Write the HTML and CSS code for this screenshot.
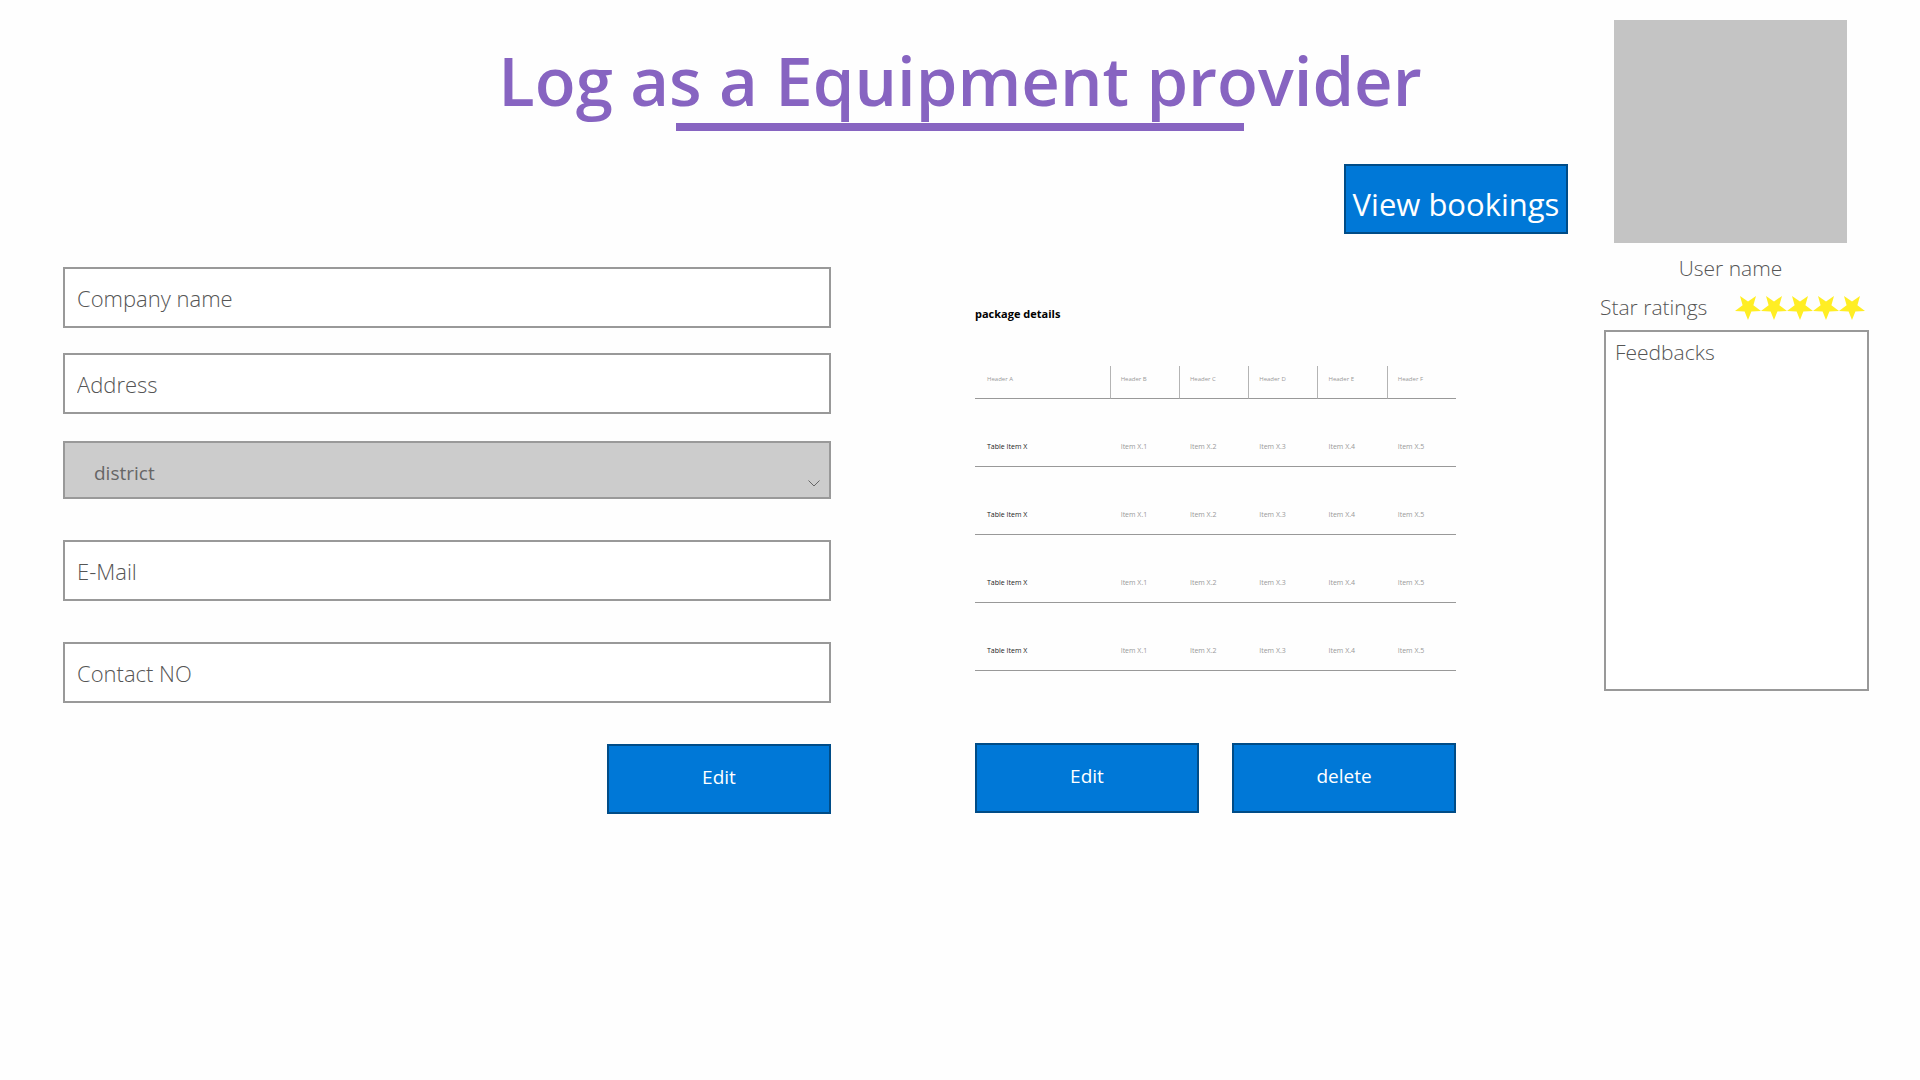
FILE: index.html
```html
<!DOCTYPE html>
<html lang="en">
<head>
<meta charset="utf-8">
<title>Log as a Equipment provider</title>
<link rel="stylesheet" href="styles.css">
</head>
<body>
<svg class="sprite" aria-hidden="true">
  <symbol id="star" viewBox="0 0 26 26">
    <path d="M13 26 L9.6 17.4 L0 17 L7.6 11.3 L5 2 L13 7.4 L21 2 L18.4 11.3 L26 17 L16.4 17.4 Z"/>
  </symbol>
</svg>
<div class="page">
  <header class="page-header">
    <h1>Log as a Equipment provider</h1>
  </header>

  <div class="toolbar">
    <button type="button" class="button button-large">View bookings</button>
  </div>

  <main class="content">
    <form class="company-form">
      <input class="field" type="text" placeholder="Company name" aria-label="Company name">
      <input class="field" type="text" placeholder="Address" aria-label="Address">
      <div class="select-wrap">
        <select class="field select" aria-label="district">
          <option>district</option>
        </select>
        <svg class="chevron" viewBox="0 0 12 7" aria-hidden="true"><path d="M0.5 0.5 L6 6 L11.5 0.5"/></svg>
      </div>
      <input class="field" type="email" placeholder="E-Mail" aria-label="E-Mail">
      <input class="field contact" type="tel" placeholder="Contact NO" aria-label="Contact NO">
      <button type="button" class="button">Edit</button>
    </form>

    <section class="packages">
      <h2>package details</h2>
      <table>
        <thead>
          <tr><th>Header A</th><th>Header B</th><th>Header C</th><th>Header D</th><th>Header E</th><th>Header F</th></tr>
        </thead>
        <tbody>
          <tr><td>Table Item X</td><td>Item X.1</td><td>Item X.2</td><td>Item X.3</td><td>Item X.4</td><td>Item X.5</td></tr>
          <tr><td>Table Item X</td><td>Item X.1</td><td>Item X.2</td><td>Item X.3</td><td>Item X.4</td><td>Item X.5</td></tr>
          <tr><td>Table Item X</td><td>Item X.1</td><td>Item X.2</td><td>Item X.3</td><td>Item X.4</td><td>Item X.5</td></tr>
          <tr><td>Table Item X</td><td>Item X.1</td><td>Item X.2</td><td>Item X.3</td><td>Item X.4</td><td>Item X.5</td></tr>
        </tbody>
      </table>
      <div class="actions">
        <button type="button" class="button">Edit</button>
        <button type="button" class="button">delete</button>
      </div>
    </section>
  </main>

  <aside class="profile">
    <div class="avatar"></div>
    <p class="user-name">User name</p>
    <div class="rating">
      <span>Star ratings</span>
      <span class="stars" role="img" aria-label="5 stars">
        <svg><use href="#star"/></svg><svg><use href="#star"/></svg><svg><use href="#star"/></svg><svg><use href="#star"/></svg><svg><use href="#star"/></svg>
      </span>
    </div>
    <textarea class="feedback" placeholder="Feedbacks" aria-label="Feedbacks"></textarea>
  </aside>
</div>
</body>
</html>
```
FILE: styles.css
```css
* {
  box-sizing: border-box;
}

body {
  margin: 0;
  background: #fefefe;
  color: #555;
  font-family: "Open Sans", "Noto Sans", sans-serif;
}

h1, h2, p {
  margin: 0;
}

button, input, select, textarea {
  font-family: inherit;
  border-radius: 0;
}

.sprite {
  display: none;
}

.page {
  display: grid;
  grid-template-columns: minmax(0, 1fr) 269px;
  grid-template-rows: auto auto 1fr;
  column-gap: 32px;
  padding: 0 51px;
}

.page-header {
  grid-column: 1 / -1;
  grid-row: 1;
  display: flex;
  flex-direction: column;
  align-items: center;
  padding-top: 37px;
  color: #8764c1;
}

.page-header h1 {
  font-size: 67px;
  font-weight: 600;
  line-height: 86px;
  white-space: nowrap;
}

.page-header::after {
  content: "";
  width: 568px;
  height: 8px;
  background: #8764c1;
}

.toolbar {
  grid-column: 1;
  grid-row: 2;
  display: flex;
  justify-content: flex-end;
  padding: 33px 0;
}

.button {
  width: 224px;
  height: 70px;
  padding: 0 0 4px;
  border: 2px solid #004c87;
  background: #0078d7;
  color: #fff;
  font-size: 19px;
}

.button-large {
  padding: 10px 0 0;
  font-size: 31px;
  white-space: nowrap;
}

.content {
  grid-column: 1;
  grid-row: 3;
  display: grid;
  grid-template-columns: 768fr 481fr;
  column-gap: 144px;
  padding: 0 112px 0 12px;
}

.company-form {
  display: flex;
  flex-direction: column;
}

.field {
  display: block;
  width: 100%;
  height: 61px;
  margin-bottom: 25px;
  padding: 0 12px;
  border: 2px solid #999;
  background: #fff;
  color: #555;
  font-size: 22px;
  font-weight: 300;
}

.field::placeholder, .feedback::placeholder {
  color: #555;
  opacity: 1;
}

.select-wrap {
  position: relative;
  margin: 2px 0 41px;
}

.select {
  appearance: none;
  height: 58px;
  margin: 0;
  padding: 6px 29px 0;
  background: #ccc;
  color: #666;
  font-size: 19px;
  font-weight: 400;
}

.chevron {
  position: absolute;
  right: 11px;
  bottom: 12px;
  width: 12px;
  height: 7px;
  fill: none;
  stroke: #666;
}

.field[type="email"], .contact {
  margin-bottom: 41px;
}

.company-form .button {
  align-self: flex-end;
}

.packages {
  padding-top: 38px;
}

.packages h2 {
  color: #000;
  font-size: 11px;
  font-weight: 700;
  line-height: 18px;
}

table {
  width: 100%;
  margin-top: 43px;
  border-collapse: separate;
  border-spacing: 0;
  table-layout: fixed;
  color: #999;
  font-size: 7px;
  line-height: 8px;
}

th, td {
  padding: 0 10px;
  border-bottom: 1px solid #999;
  text-align: left;
  font-weight: 400;
  white-space: nowrap;
}

th {
  height: 33px;
  padding-bottom: 6px;
  font-size: 6px;
}

th:first-child {
  width: 28%;
}

th + th {
  border-left: 1px solid #b4b4b4;
}

td {
  height: 68px;
  padding-top: 28px;
}

td + td {
  padding-left: 11px;
}

th:first-child, td:first-child {
  padding-left: 12px;
}

td:first-child {
  color: #222;
}

.actions {
  display: flex;
  justify-content: space-between;
  margin-top: 72px;
}

.profile {
  grid-column: 2;
  grid-row: 1 / 4;
  display: flex;
  flex-direction: column;
  align-items: center;
  padding-top: 20px;
  font-size: 21px;
  font-weight: 300;
}

.avatar {
  width: 233px;
  height: 223px;
  margin-right: 8px;
  background: #c4c4c4;
}

.user-name {
  margin: 9px 8px 0 0;
  line-height: 32px;
}

.rating {
  display: flex;
  justify-content: space-between;
  align-items: center;
  align-self: stretch;
  height: 32px;
  margin: 7px 4px 7px 0;
}

.stars {
  display: flex;
}

.stars svg {
  width: 26px;
  height: 26px;
  fill: #ffee24;
}

.feedback {
  align-self: flex-end;
  width: 265px;
  height: 361px;
  padding: 4px 9px;
  border: 2px solid #999;
  background: #fff;
  font-size: 21px;
  font-weight: 300;
  line-height: 32px;
  resize: none;
}
```
